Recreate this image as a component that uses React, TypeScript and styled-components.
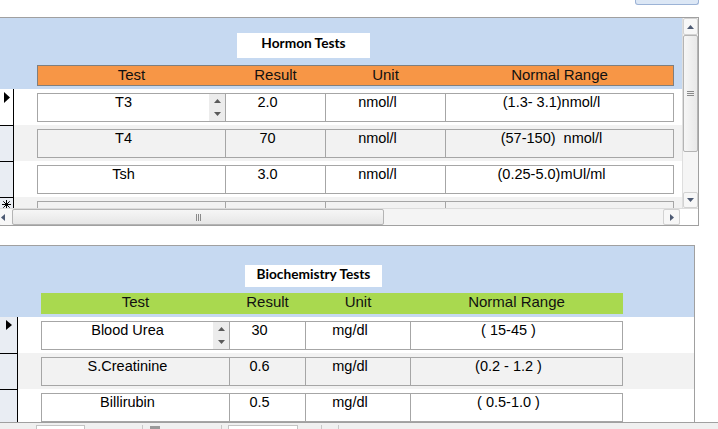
import React from "react";
import styled, { createGlobalStyle } from "styled-components";

const GlobalStyle = createGlobalStyle`
  body {
    margin: 0;
    background: #fff;
    font-family: "Liberation Sans", Arial, sans-serif;
  }
`;

type Tone = "orange" | "green";

const hormonCols = [187, 100, 120, 228];
const bioCols = [187, 76, 105, 212];

const hormonRows = [
  ["T3", "2.0", "nmol/l", "(1.3- 3.1)nmol/l"],
  ["T4", "70", "nmol/l", "(57-150)  nmol/l"],
  ["Tsh", "3.0", "nmol/l", "(0.25-5.0)mUl/ml"],
];

const bioRows = [
  ["Blood Urea", "30", "mg/dl", "( 15-45 )"],
  ["S.Creatinine", "0.6", "mg/dl", "(0.2 - 1.2 )"],
  ["Billirubin", "0.5", "mg/dl", "( 0.5-1.0 )"],
];

function Tri({ dir, w = 7, h = 4, color = "#4d5a73" }: { dir: "up" | "down" | "left" | "right"; w?: number; h?: number; color?: string }) {
  const pts =
    dir === "up"
      ? `0,${h} ${w},${h} ${w / 2},0`
      : dir === "down"
      ? `0,0 ${w},0 ${w / 2},${h}`
      : dir === "right"
      ? `0,0 ${w},${h / 2} 0,${h}`
      : `${w},0 0,${h / 2} ${w},${h}`;
  return (
    <svg width={w} height={h} viewBox={`0 0 ${w} ${h}`} style={{ display: "block" }}>
      <polygon points={pts} fill={color} />
    </svg>
  );
}

function Star() {
  return (
    <svg width="9" height="9" viewBox="0 0 9 9" style={{ display: "block" }}>
      <g stroke="#000" strokeWidth="1">
        <line x1="4.5" y1="0" x2="4.5" y2="9" />
        <line x1="0" y1="4.5" x2="9" y2="4.5" />
        <line x1="1.3" y1="1.3" x2="7.7" y2="7.7" />
        <line x1="7.7" y1="1.3" x2="1.3" y2="7.7" />
      </g>
    </svg>
  );
}

export default function App() {
  return (
    <Page>
      <GlobalStyle />
      <TopStrip>
        <TopButton />
      </TopStrip>

      <Panel $w={699} $bottom>
        <PanelBody $h={190}>
          <Sheet>
            <Band>
              <Title $left={237} $top={15} $w={133} $h={25} $pad={1}>
                Hormon Tests
              </Title>
              <HeaderRow $left={37} $tone="orange">
                {["Test", "Result", "Unit", "Normal Range"].map((t, i) => (
                  <HeadCell key={t} $w={hormonCols[i]} $tone="orange">
                    {t}
                  </HeadCell>
                ))}
              </HeaderRow>
            </Band>
            {hormonRows.map((r, ri) => (
              <DataRow key={ri} $alt={ri % 2 === 1}>
                <Selector $w={14} $first={ri === 0} $active={ri === 0}>
                  {ri === 0 && <Tri dir="right" w={6} h={11} color="#000" />}
                </Selector>
                <Box>
                  {r.map((v, i) => (
                    <Cell key={i} $w={hormonCols[i]}>
                      <CellText $spin={ri === 0 && i === 0}>{v}</CellText>
                      {ri === 0 && i === 0 && (
                        <Spinner>
                          <Tri dir="up" w={7} h={4} color="#5a5a5a" />
                          <Tri dir="down" w={7} h={4} color="#5a5a5a" />
                        </Spinner>
                      )}
                    </Cell>
                  ))}
                </Box>
              </DataRow>
            ))}
            <DataRow $alt>
              <Selector $w={14} $first={false} $active={false}>
                <StarWrap>
                  <Star />
                </StarWrap>
              </Selector>
              <Box>
                {hormonCols.map((w, i) => (
                  <Cell key={i} $w={w} />
                ))}
              </Box>
            </DataRow>
          </Sheet>
          <VScroll>
            <VButton $h={17}>
              <Tri dir="up" />
            </VButton>
            <VThumb>
              <GripH />
              <GripH />
              <GripH />
            </VThumb>
            <VTrack />
            <VButton $h={16}>
              <Tri dir="down" />
            </VButton>
          </VScroll>
        </PanelBody>
        <HScroll>
          <HButton $w={12}>
            <Tri dir="left" w={4} h={7} />
          </HButton>
          <HThumb>
            <GripV />
            <GripV />
            <GripV />
          </HThumb>
          <HTrack />
          <HButton $w={17} $boxed>
            <Tri dir="right" w={4} h={7} />
          </HButton>
          <Corner />
        </HScroll>
      </Panel>

      <Gap />

      <Panel $w={695}>
        <PanelBody $h={176}>
          <Sheet>
            <Band>
              <Title $left={245} $top={19} $w={137} $h={22} $pad={0}>
                Biochemistry Tests
              </Title>
              <HeaderRow $left={41} $tone="green">
                {["Test", "Result", "Unit", "Normal Range"].map((t, i) => (
                  <HeadCell key={t} $w={bioCols[i]} $tone="green">
                    {t}
                  </HeadCell>
                ))}
              </HeaderRow>
            </Band>
            {bioRows.map((r, ri) => (
              <DataRow key={ri} $alt={ri % 2 === 1}>
                <Selector $w={18} $first={ri === 0} $active={false}>
                  {ri === 0 && <Tri dir="right" w={6} h={10} color="#000" />}
                </Selector>
                <Box>
                  {r.map((v, i) => (
                    <Cell key={i} $w={bioCols[i]}>
                      <CellText $spin={ri === 0 && i === 0}>{v}</CellText>
                      {ri === 0 && i === 0 && (
                        <Spinner>
                          <Tri dir="up" w={7} h={4} color="#5a5a5a" />
                          <Tri dir="down" w={7} h={4} color="#5a5a5a" />
                        </Spinner>
                      )}
                    </Cell>
                  ))}
                </Box>
              </DataRow>
            ))}
          </Sheet>
        </PanelBody>
      </Panel>

      <NavBar>
        <NavSeg $w={143}>
          <NavInput $left={36} $w={49} />
        </NavSeg>
        <NavSeg $w={79}>
          <FilterIcon />
        </NavSeg>
        <NavSeg $w={100}>
          <NavInput $left={6} $w={70} />
        </NavSeg>
        <NavSeg $w={17} />
      </NavBar>
    </Page>
  );
}

const Page = styled.div`
  width: 718px;
  height: 429px;
  overflow: hidden;
  background: #fff;
`;

const TopStrip = styled.div`
  height: 17px;
  display: flex;
  justify-content: flex-end;
  align-items: flex-start;
  padding-right: 19px;
`;

const TopButton = styled.div`
  width: 64px;
  height: 5px;
  box-sizing: border-box;
  border: 1px solid #9cb3d6;
  border-top: none;
  border-radius: 0 0 3px 3px;
  background: #dce7f5;
`;

const Panel = styled.div<{ $w: number; $bottom?: boolean }>`
  width: ${(p) => p.$w}px;
  box-sizing: border-box;
  border-top: 1px solid #a0a0a0;
  border-right: 1px solid #a0a0a0;
  border-bottom: ${(p) => (p.$bottom ? "1px solid #a0a0a0" : "none")};
`;

const PanelBody = styled.div<{ $h: number }>`
  display: flex;
  height: ${(p) => p.$h}px;
`;

const Sheet = styled.div`
  flex: 1;
  min-width: 0;
  overflow: hidden;
  display: flex;
  flex-direction: column;
`;

const Band = styled.div`
  height: 71px;
  flex-shrink: 0;
  background: #c6d9f1;
  display: flex;
  flex-direction: column;
`;

const Title = styled.div<{ $left: number; $top: number; $w: number; $h: number; $pad: number }>`
  margin: ${(p) => p.$top}px 0 0 ${(p) => p.$left}px;
  width: ${(p) => p.$w}px;
  height: ${(p) => p.$h}px;
  box-sizing: border-box;
  padding-top: ${(p) => p.$pad}px;
  background: #fff;
  text-align: center;
  font-family: Lato, "Open Sans", sans-serif;
  font-weight: 700;
  font-size: 13.7px;
  line-height: 17px;
  color: #000;
`;

const HeaderRow = styled.div<{ $left: number; $tone: Tone }>`
  display: flex;
  width: fit-content;
  height: 21px;
  box-sizing: border-box;
  margin: auto 0 3px ${(p) => p.$left}px;
  border: 1px solid ${(p) => (p.$tone === "orange" ? "#7f7f7f" : "#a9d94f")};
  background: ${(p) => (p.$tone === "orange" ? "#f79646" : "#a9d94f")};
`;

const HeadCell = styled.div<{ $w: number; $tone: Tone }>`
  width: ${(p) => p.$w}px;
  box-sizing: border-box;
  text-align: center;
  font-size: 15px;
  line-height: ${(p) => (p.$tone === "orange" ? 18 : 15)}px;
  color: #111;
  & + & {
    border-left: 1px solid ${(p) => (p.$tone === "orange" ? "#7f7f7f" : "transparent")};
  }
`;

const DataRow = styled.div<{ $alt: boolean }>`
  display: flex;
  height: 36px;
  flex-shrink: 0;
  background: ${(p) => (p.$alt ? "#f2f2f2" : "#fff")};
`;

const Selector = styled.div<{ $w: number; $first: boolean; $active: boolean }>`
  width: ${(p) => p.$w}px;
  flex-shrink: 0;
  box-sizing: border-box;
  border-right: 1px solid #000;
  border-top: ${(p) => (p.$first ? "none" : "1px solid #000")};
  background: ${(p) => (p.$active ? "#fff" : "#e9edf3")};
  display: flex;
  justify-content: center;
  padding-top: 3px;
`;

const StarWrap = styled.div`
  margin-top: -1px;
`;

const Box = styled.div`
  display: flex;
  width: fit-content;
  height: 29px;
  box-sizing: border-box;
  margin: 4px 0 0 23px;
  border: 1px solid #a6a6a6;
`;

const Cell = styled.div<{ $w: number }>`
  width: ${(p) => p.$w}px;
  box-sizing: border-box;
  display: flex;
  & + & {
    border-left: 1px solid #a6a6a6;
  }
`;

const CellText = styled.div<{ $spin: boolean }>`
  flex: 1;
  text-align: center;
  white-space: pre;
  font-size: 14.5px;
  line-height: 17px;
  color: #000;
  padding-right: ${(p) => (p.$spin ? 0 : 16)}px;
`;

const Spinner = styled.div`
  width: 16px;
  background: #ececec;
  display: flex;
  flex-direction: column;
  justify-content: space-between;
  align-items: center;
  padding: 5px 0 5px;
  box-sizing: border-box;
`;

const VScroll = styled.div`
  width: 16px;
  flex-shrink: 0;
  box-sizing: border-box;
  border-left: 1px solid #dedede;
  background: #f3f3f3;
  display: flex;
  flex-direction: column;
`;

const VButton = styled.div<{ $h: number }>`
  height: ${(p) => p.$h}px;
  box-sizing: border-box;
  border: 1px solid #d2d2d2;
  border-radius: 2px;
  background: #f7f7f7;
  display: flex;
  align-items: center;
  justify-content: center;
`;

const VThumb = styled.div`
  height: 117px;
  box-sizing: border-box;
  border: 1px solid #b4b4b4;
  border-radius: 2px;
  background: linear-gradient(90deg, #f6f6f6, #e8e8e8);
  display: flex;
  flex-direction: column;
  align-items: center;
  justify-content: center;
  gap: 1px;
`;

const GripH = styled.div`
  width: 7px;
  height: 1px;
  background: #8a8a8a;
`;

const VTrack = styled.div`
  flex: 1;
  background: #f5f5f5;
`;

const HScroll = styled.div`
  height: 17px;
  display: flex;
  box-sizing: border-box;
  border-top: 1px solid #dcdcdc;
  background: #f0f0f0;
`;

const HButton = styled.div<{ $w: number; $boxed?: boolean }>`
  width: ${(p) => p.$w}px;
  flex-shrink: 0;
  box-sizing: border-box;
  border: ${(p) => (p.$boxed ? "1px solid #d2d2d2" : "none")};
  border-radius: 2px;
  background: #f7f7f7;
  display: flex;
  align-items: center;
  justify-content: ${(p) => (p.$boxed ? "center" : "flex-start")};
  padding-left: ${(p) => (p.$boxed ? 0 : 1)}px;
`;

const HThumb = styled.div`
  width: 372px;
  flex-shrink: 0;
  box-sizing: border-box;
  border: 1px solid #b4b4b4;
  border-radius: 2px;
  background: linear-gradient(180deg, #f6f6f6, #e6e6e6);
  display: flex;
  align-items: center;
  justify-content: center;
  gap: 1px;
`;

const GripV = styled.div`
  width: 1px;
  height: 7px;
  background: #8a8a8a;
`;

const HTrack = styled.div`
  flex: 1;
  background: #f4f4f4;
`;

const Corner = styled.div`
  width: 18px;
  flex-shrink: 0;
  background: #fff;
`;

const Gap = styled.div`
  height: 19px;
`;

const NavBar = styled.div`
  height: 20px;
  display: flex;
  border-top: 1px solid #a0a0a0;
  background: #f0f0f0;
  padding-top: 2px;
  box-sizing: border-box;
`;

const NavSeg = styled.div<{ $w: number }>`
  width: ${(p) => p.$w}px;
  height: 100%;
  box-sizing: border-box;
  border-right: 1px solid #c8c8c8;
  display: flex;
  align-items: flex-start;
`;

const NavInput = styled.div<{ $left: number; $w: number }>`
  margin-left: ${(p) => p.$left}px;
  width: ${(p) => p.$w}px;
  height: 16px;
  box-sizing: border-box;
  border: 1px solid #c4c4c4;
  background: #fff;
`;

const FilterIcon = styled.div`
  margin: 1px 0 0 7px;
  width: 10px;
  height: 4px;
  background: #9a9a9a;
`;
